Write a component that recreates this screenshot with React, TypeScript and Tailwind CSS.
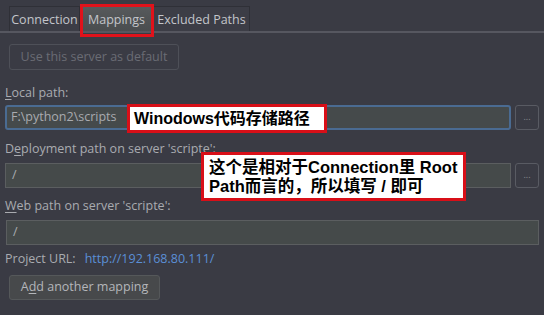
import React from "react";

const font = { fontFamily: '"Open Sans", "Noto Sans", sans-serif' };

function Browse() {
  return (
    <div className="w-[24px] h-[25px] ml-[4px] shrink-0 rounded-[3px] border border-[#595b63] flex items-center justify-center text-[#8a8c92] text-[9px] leading-none pb-[2px]">
      ...
    </div>
  );
}

export default function App() {
  return (
    <div
      className="relative w-[544px] h-[315px] bg-[#3a3b44] text-[#a9abb0] text-[12.5px] overflow-hidden"
      style={font}
    >
      {/* tab strip */}
      <div className="flex items-end h-[33px] pl-[9px] pt-[6px] border-b-[2px] border-[#565760]">
        <div className="w-[71px] h-[25px] pt-[3px] flex items-center justify-center border border-b-0 border-[#2f3037] bg-[#3c3d46] text-[#c3c5ca] whitespace-nowrap">
          Connection
        </div>
        <div className="w-[73px] h-[25px] pt-[3px] flex items-center justify-center border border-b-0 border-[#2f3037] bg-gradient-to-b from-[#575a5c] to-[#4a4d4f] text-[#c3c5ca] whitespace-nowrap">
          Mappings
        </div>
        <div className="w-[97px] h-[25px] pt-[3px] flex items-center justify-center border border-b-0 border-[#2f3037] bg-[#3c3d46] text-[#c3c5ca] whitespace-nowrap">
          Excluded Paths
        </div>
      </div>

      <div className="flex flex-col px-[5px]">
        <div className="mt-[11px] ml-[4px] w-[170px] h-[26px] rounded-[3px] border border-[#4e5058] flex items-center justify-center text-[#6a6c74]">
          Use this server as default
        </div>

        <div className="mt-[14px] h-[17px] leading-[17px]">
          <span className="underline underline-offset-2">L</span>ocal path:
        </div>
        <div className="mt-[4px] flex">
          <div className="flex-1 h-[25px] rounded-[3px] border-[2px] border-[#4a6b92] bg-[#454a4b] flex items-center px-[4px] text-[#a9abb0]">
            F:\python2\scripts
          </div>
          <Browse />
        </div>

        <div className="mt-[10px] h-[17px] leading-[17px]">
          D<span className="underline underline-offset-2">e</span>ployment path on server 'scripte':
        </div>
        <div className="mt-[6px] flex">
          <div className="flex-1 h-[25px] border border-[#5b5e60] bg-[#454a4a] flex items-center px-[6px] text-[#a9abb0]">
            /
          </div>
          <Browse />
        </div>

        <div className="mt-[9px] h-[17px] leading-[17px]">
          <span className="underline underline-offset-2">W</span>eb path on server 'scripte':
        </div>
        <div className="mt-[6px] ml-[1px] h-[25px] border border-[#5b5e60] bg-[#454a4a] flex items-center px-[6px] text-[#a9abb0]">
          /
        </div>

        <div className="mt-[5px] h-[17px] leading-[17px] flex">
          <span>Project URL:</span>
          <span className="ml-[9px] text-[#5b8fd6]">http://192.168.80.111/</span>
        </div>

        <div className="mt-[8px] ml-[4px] w-[151px] h-[25px] rounded-[3px] border border-[#55585a] bg-[#47494b] flex items-center justify-center text-[#b4b6ba]">
          A<span className="underline underline-offset-2">d</span>d another mapping
        </div>
      </div>

      {/* annotation: selected tab */}
      <div className="absolute left-[80px] top-[4px] w-[74px] h-[33px] border-[3px] border-[#e0121b]" />

      {/* annotation 1 */}
      <div
        className="absolute left-[127px] top-[104px] w-[200px] h-[29px] bg-white border-[3px] border-[#d80f18] flex items-center pl-[4px] text-black font-bold text-[16px] leading-none whitespace-nowrap"
        style={{ fontFamily: '"Liberation Sans", "Noto Sans CJK SC", sans-serif' }}
      >
        Winodows代码存储路径
      </div>

      {/* annotation 2 */}
      <div
        className="absolute left-[201px] top-[152px] w-[265px] h-[49px] bg-white border-[3px] border-[#d80f18] flex flex-col justify-center pl-[5px] text-black font-bold text-[16.5px] leading-[19px] whitespace-nowrap"
        style={{ fontFamily: '"Liberation Sans", "Noto Sans CJK SC", sans-serif' }}
      >
        <div>这个是相对于Connection里 Root</div>
        <div>Path而言的，所以填写 / 即可</div>
      </div>
    </div>
  );
}
